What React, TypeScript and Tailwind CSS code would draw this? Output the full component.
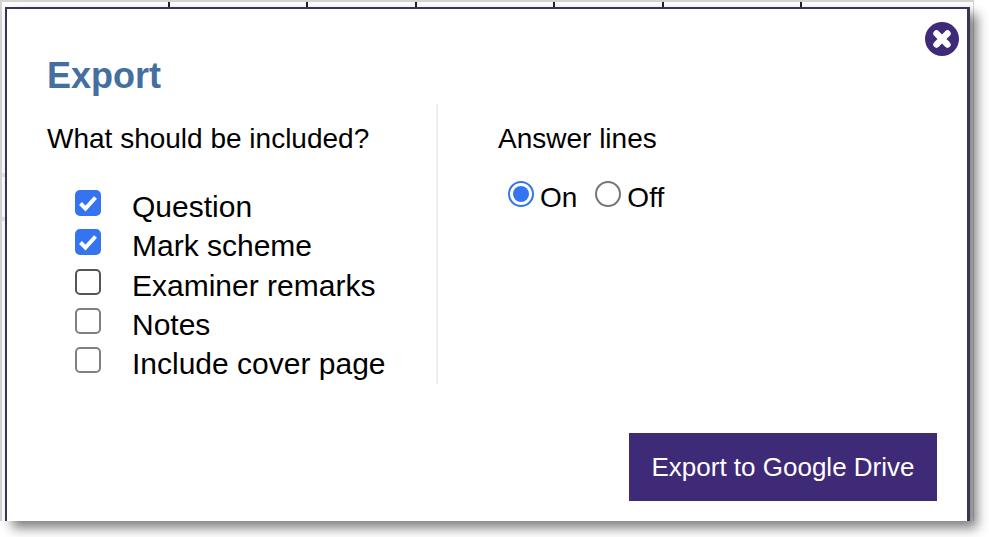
const includes = [
  { label: "Question", checked: true, edge: "border-[#767676]" },
  { label: "Mark scheme", checked: true, edge: "border-[#767676]" },
  { label: "Examiner remarks", checked: false, edge: "border-[#555555]" },
  { label: "Notes", checked: false, edge: "border-[#808080]" },
  { label: "Include cover page", checked: false, edge: "border-[#808080]" },
];

const tableCols = ["w-[168px]", "w-[138px]", "w-[109px]", "w-[138px]", "w-[109px]", "w-[138px]"];

function Check({ checked, edge }: { checked: boolean; edge: string }) {
  return (
    <span className="relative block h-[26px] w-[26px] shrink-0">
      <input
        type="checkbox"
        defaultChecked={checked}
        className={`m-0 block h-[26px] w-[26px] appearance-none rounded-[5px] border-2 bg-white ${edge} checked:border-[#3574f0] checked:bg-[#3574f0]`}
      />
      {checked && (
        <svg viewBox="0 0 26 26" className="pointer-events-none absolute inset-0 h-[26px] w-[26px]">
          <path d="M5.5 13.5 L10.5 18.5 L20.5 7.5" fill="none" stroke="#fff" strokeWidth="4" />
        </svg>
      )}
    </span>
  );
}

function Radio({ checked }: { checked: boolean }) {
  return (
    <span className="relative block h-[26px] w-[26px] shrink-0">
      <input
        type="radio"
        name="lines"
        defaultChecked={checked}
        className="m-0 block h-[26px] w-[26px] appearance-none rounded-full border-2 border-[#767676] bg-white checked:border-[#3574f0]"
      />
      {checked && <span className="pointer-events-none absolute inset-[5px] rounded-full bg-[#3574f0]" />}
    </span>
  );
}

export default function App() {
  return (
    <div className="relative h-[537px] w-[989px] overflow-hidden bg-white font-['Liberation_Sans',Arial,sans-serif] text-black">
      {/* page behind the dialog */}
      <div className="h-[521px] w-[974px] border-t-2 border-r border-l-2 border-[#d4d4d4] bg-white">
        <div className="flex h-[5px]">
          {tableCols.map((w, i) => (
            <div key={i} className={`${w} border-r-2 border-[#222]`} />
          ))}
        </div>
        <div className="mt-[166px] h-[4px] w-[3px] bg-[#e6e6ee]" />
        <div className="mt-[40px] h-[4px] w-[3px] bg-[#e6e6ee]" />
      </div>

      <div className="absolute top-[7px] left-[5px] h-[514px] w-[965px] border-t-2 border-r-[3px] border-l-2 border-[#3c3357] bg-white shadow-[7px_7px_11px_rgba(0,0,0,0.5)]">
        <button className="absolute top-[13px] right-[8px] flex h-[34px] w-[34px] items-center justify-center rounded-full bg-[#3f2a78]">
          <svg viewBox="0 0 20 20" className="h-[22px] w-[22px]">
            <path d="M5 5 L15 15 M15 5 L5 15" stroke="#fff" strokeWidth="5.8" strokeLinecap="round" />
          </svg>
        </button>

        <h2 className="pt-[47px] pl-[40px] text-[36px] leading-[40px] font-bold text-[#446f9f]">Export</h2>

        <div className="mt-[8px] flex">
          <div className="h-[280px] w-[431px] border-r-2 border-[#eeeeee] pt-[20px] pl-[40px]">
            <p className="text-[28px] leading-[30px]">What should be included?</p>
            <ul className="mt-[36px] flex flex-col pl-[28px]">
              {includes.map((item) => (
                <li key={item.label} className="flex h-[39.25px] items-start">
                  <Check checked={item.checked} edge={item.edge} />
                  <span className="ml-[31px] text-[30px] leading-[33px]">{item.label}</span>
                </li>
              ))}
            </ul>
          </div>

          <div className="pt-[20px] pl-[60px]">
            <p className="text-[28px] leading-[30px]">Answer lines</p>
            <div className="mt-[27px] flex items-start pl-[10px] text-[28px] leading-[30px]">
              <Radio checked />
              <span className="ml-[6px] pt-[2px]">On</span>
              <span className="ml-[18px]">
                <Radio checked={false} />
              </span>
              <span className="ml-[6px] pt-[2px]">Off</span>
            </div>
          </div>
        </div>

        <div className="mt-[49px] flex justify-end pr-[30px]">
          <button className="flex h-[68px] w-[308px] items-center justify-center bg-[#3f2a78] text-[26px] text-white">
            Export to Google Drive
          </button>
        </div>
      </div>
    </div>
  );
}
